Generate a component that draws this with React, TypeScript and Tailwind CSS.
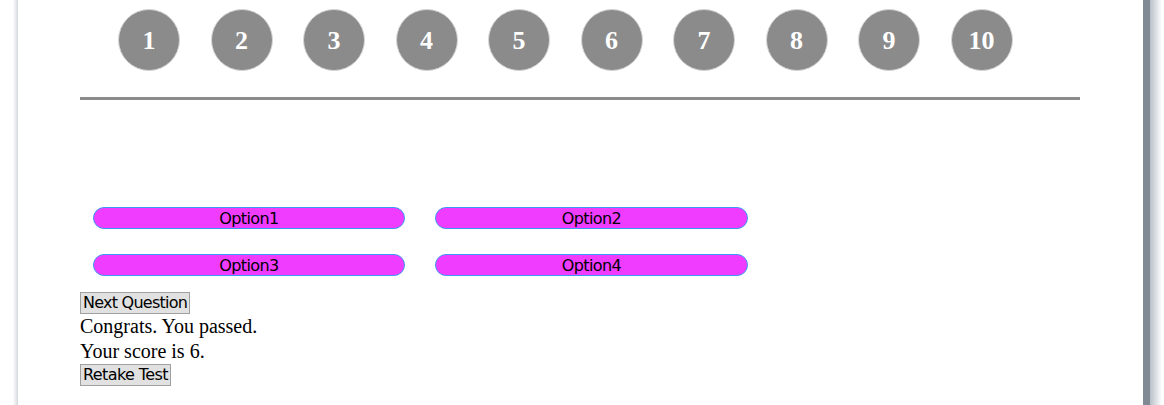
export default function App() {
  const nums = [1, 2, 3, 4, 5, 6, 7, 8, 9, 10];
  return (
    <div className="w-[1164px] h-[405px] bg-white flex overflow-hidden">
      <div className="w-[13px] shrink-0" />
      <div className="w-[5px] shrink-0 bg-gradient-to-r from-white to-[#d4d8de]" />
      <div className="w-[1125px] shrink-0 bg-white pl-[62px]">
        <div className="w-[1000px]">
          <div className="flex gap-[30.5px] pl-[38px] pt-[9px]">
            {nums.map((n) => (
              <div
                key={n}
                className="w-[62px] h-[62px] rounded-full bg-[#8b8b8b] border border-[#d6d6d6] flex items-center justify-center text-white font-bold text-[26px] font-['Liberation_Serif',serif]"
              >
                {n}
              </div>
            ))}
          </div>
          <div className="mt-[26px] h-[3px] bg-[#8b8b8b]" />
          <div className="pt-[107px] pl-[13px] grid grid-cols-[312px_313px] gap-x-[30px] gap-y-[25px]">
            {["Option1", "Option2", "Option3", "Option4"].map((o) => (
              <div
                key={o}
                className="h-[22px] pt-[1px] rounded-full bg-[#f03cff] border border-[#3b99f5] flex items-center justify-center text-black text-[16px] font-['DejaVu_Sans',sans-serif] tracking-[-0.6px]"
              >
                {o}
              </div>
            ))}
          </div>
          <div className="mt-[16px] font-['Liberation_Serif',serif] text-[20px] leading-[25px] text-black">
            <button className="block h-[22px] px-[2px] bg-[#e1e1e1] border border-[#a0a0a0] text-[16px] leading-[18px] font-['DejaVu_Sans',sans-serif] tracking-[-0.75px]">
              Next Question
            </button>
            <div>Congrats. You passed.</div>
            <div>Your score is 6.</div>
            <button className="block h-[22px] px-[2px] bg-[#e1e1e1] border border-[#a0a0a0] text-[16px] leading-[18px] font-['DejaVu_Sans',sans-serif] tracking-[-0.6px]">
              Retake Test
            </button>
          </div>
        </div>
      </div>
      <div className="w-[7px] shrink-0 bg-[#7f8a95]" />
      <div className="w-[12px] shrink-0 bg-gradient-to-r from-[#b8c0c8] to-white" />
    </div>
  );
}
